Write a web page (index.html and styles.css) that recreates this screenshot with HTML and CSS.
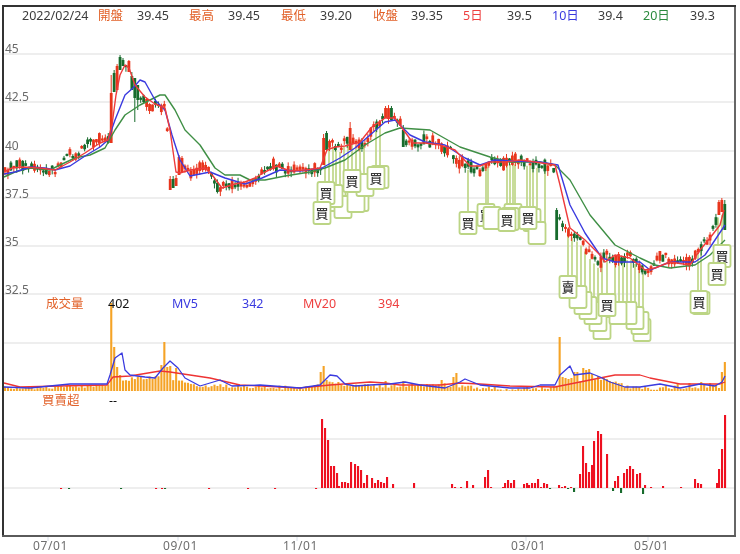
FILE: index.html
```html
<!DOCTYPE html>
<html lang="zh-Hant">
<head>
<meta charset="utf-8">
<title>2022/02/24</title>
<link rel="stylesheet" href="styles.css">
</head>
<body>
<main class="chart">
<svg id="chart" class="chart-svg" width="740" height="554" viewBox="0 0 740 554">
  <g id="grid"></g>
  <g id="stems"></g>
  <g id="candles"></g>
  <g id="averages"></g>
  <g id="markers"></g>
  <g id="volume"></g>
  <g id="netbuy"></g>
  <g id="frame"></g>
  <g class="legend">
    <text class="ink" x="22" y="20">2022/02/24</text>
    <text class="lab" x="98" y="20">開盤</text><text class="ink" x="137" y="20">39.45</text>
    <text class="lab" x="189" y="20">最高</text><text class="ink" x="228" y="20">39.45</text>
    <text class="lab" x="281" y="20">最低</text><text class="ink" x="320" y="20">39.20</text>
    <text class="lab" x="373" y="20">收盤</text><text class="ink" x="411" y="20">39.35</text>
    <text class="red" x="463" y="20">5日</text><text class="ink" x="507" y="20">39.5</text>
    <text class="blue" x="552" y="20">10日</text><text class="ink" x="598" y="20">39.4</text>
    <text class="green" x="643" y="20">20日</text><text class="ink" x="690" y="20">39.3</text>
    <text class="lab" x="46" y="308">成交量</text><text class="black" x="108" y="308">402</text>
    <text class="blue" x="172" y="308">MV5</text><text class="blue" x="242" y="308">342</text>
    <text class="red" x="303" y="308">MV20</text><text class="red" x="378" y="308">394</text>
    <text class="lab" x="42" y="405">買賣超</text><text class="black" x="109" y="405">--</text>
  </g>
  <g class="axis">
    <text x="5" y="53">45</text><text x="5" y="101">42.5</text><text x="5" y="150">40</text>
    <text x="5" y="198">37.5</text><text x="5" y="246">35</text><text x="5" y="294">32.5</text>
  </g>
  <g class="dates">
    <text x="33" y="550">07/01</text><text x="163" y="550">09/01</text><text x="283" y="550">11/01</text>
    <text x="511" y="550">03/01</text><text x="634" y="550">05/01</text>
  </g>
</svg>
</main>
<script src="chart.js"></script>
</body>
</html>
```
FILE: styles.css
```css
html, body { margin: 0; padding: 0; background: #fff; }
.chart { width: 740px; height: 554px; overflow: hidden; }
.chart-svg { display: block; filter: blur(0.45px); }
.legend text { font-family: "Noto Sans", "Noto Sans CJK TC", sans-serif; font-size: 12.5px; }
.ink { fill: #3c3c3c; }
.black { fill: #111; }
.lab { fill: #e2622a; }
.red { fill: #ee3f3f; }
.blue { fill: #3a3adf; }
.green { fill: #2b8a3e; }
.axis text { font-family: "Noto Sans", sans-serif; font-size: 12px; fill: #6a6a6a; }
.dates text { font-family: "Noto Sans", sans-serif; font-size: 12px; letter-spacing: .6px; fill: #6e6e6e; }
.marker-box { fill: #fff; stroke: #bcd585; stroke-width: 1.8; }
.marker-text { font-family: "Noto Sans CJK TC", sans-serif; font-size: 13px; font-weight: 500; fill: #3a3a3a; text-anchor: middle; }
```
FILE: chart.js
```js
(function () {
var NS = "http://www.w3.org/2000/svg";
function el(parent, name, attrs) {
  var e = document.createElementNS(NS, name);
  for (var k in attrs) e.setAttribute(k, attrs[k]);
  document.getElementById(parent).appendChild(e);
  return e;
}
var seed = 17;
function rnd() { seed = (seed * 16807) % 2147483647; return (seed - 1) / 2147483646; }
function interp(path, x) {
  for (var i = 1; i < path.length; i++) {
    if (x <= path[i][0]) {
      var a = path[i - 1], b = path[i];
      return a[1] + (b[1] - a[1]) * (x - a[0]) / (b[0] - a[0]);
    }
  }
  return path[path.length - 1][1];
}
function line(parent, x1, y1, x2, y2, color, w) {
  return el(parent, "line", { x1: x1, y1: y1, x2: x2, y2: y2, stroke: color, "stroke-width": w });
}
function curve(parent, pts, color, w) {
  el(parent, "polyline", {
    points: pts.map(function (p) { return p.join(","); }).join(" "),
    fill: "none", stroke: color, "stroke-width": w, "stroke-linejoin": "round"
  });
}

/* grid and frame */
[54, 102, 151, 198, 246, 294, 343, 439, 488].forEach(function (y) {
  line("grid", 4, y, 734, y, "#e9e9e9", 1.3);
});
line("frame", 3, 5, 3, 537, "#333", 2);
line("frame", 2, 6, 736, 6, "#333", 2);
line("frame", 735, 5, 735, 536, "#333", 1.5);
line("frame", 2, 536, 736, 536, "#5a5a5a", 2);
[48, 178, 297, 526, 648].forEach(function (x) { line("frame", x, 537, x, 541, "#d8dfe8", 1); });

/* price */
var closes = [[4,173],[12,168],[20,163],[30,168],[40,168],[48,170],[55,171],[62,163],[68,150],[75,156],[85,146],[92,141],[100,140],[108,139],
[112,118],[115,82],[118,78],[121,64],[128,66],[135,90],[142,98],[150,105],[160,105],[166,108],[170,183],[176,180],[181,166],[190,172],[200,167],[210,170],
[218,189],[224,186],[232,182],[243,188],[250,183],[262,172],[275,165],[285,170],[295,171],[310,170],[320,170],[325,148],[330,142],[340,148],[350,135],[358,145],[368,140],
[372,125],[380,122],[387,112],[392,118],[400,122],[405,140],[415,145],[425,140],[435,143],[450,150],[458,162],[465,165],[472,167],[480,172],[490,160],[500,163],[510,160],[520,161],[530,162],[540,165],[555,168],
[560,225],[570,232],[580,240],[590,255],[600,266],[605,250],[612,262],[620,258],[630,255],[640,265],[645,272],[650,272],[655,262],[660,258],[665,255],[672,262],[680,262],[690,263],[697,250],[702,245],[708,240],[715,222],[720,208],[725,215]];
var big = {
  112:[93,143,1,75],115:[73,92,0,70],118:[66,90,1,64],121:[57,70,0,55],124:[60,66,0,58],128:[61,72,1,60],131:[76,90,0,72],134:[78,98,0,122],137:[85,100,0,110],
  170:[179,190,1,176],173:[179,188,0,176],176:[178,186,1,175],180:[157,175,1,155],183:[158,172,1,156],
  325:[138,165,1,134],328:[133,150,0,131],350:[128,150,1,122],387:[108,118,1,106],390:[108,120,0,106],404:[130,147,0,125],
  558:[210,240,0,208],718:[202,215,1,200],721:[200,212,1,198],724:[204,230,0,200]
};
var spacing = 2.95;
for (var i = 0; i < 246; i++) {
  var x = 5 + i * spacing, key = null;
  for (var k in big) if (Math.abs(k - x) < spacing / 2) key = k;
  if (x > 726) break;
  var up, bodyTop, bodyBot, wt, wb;
  if (key) {
    var b = big[key];
    bodyTop = b[0]; bodyBot = b[1]; up = b[2] === 1;
    wt = Math.min(b[3], bodyTop); wb = Math.max(b[3], bodyBot);
  } else {
    var c = interp(closes, x) + (rnd() - .5) * 6;
    var h = 2 + rnd() * rnd() * 11;
    bodyTop = c - h / 2; bodyBot = c + h / 2; up = rnd() > .42;
    wt = bodyTop - rnd() * 4; wb = bodyBot + rnd() * 5;
  }
  var col = up ? "#e8351c" : "#176b2c";
  line("candles", x, wt, x, wb, col, 1);
  el("candles", "rect", { x: x - 1.4, y: bodyTop, width: 2.8, height: bodyBot - bodyTop, fill: col });
}

/* moving averages */
var ma5 = [[4,172],[12,168],[22,167],[40,168],[55,170],[70,162],[85,153],[100,143],[108,140],[112,125],[116,95],[120,75],[125,65],[129,68],[135,85],[145,97],[155,104],[165,108],[170,130],[176,172],[180,173],[190,170],[205,168],[213,176],[222,188],[235,184],[245,182],[255,178],[265,172],[277,166],[290,171],[305,170],[320,168],[327,150],[335,147],[345,146],[360,142],[372,127],[385,118],[395,118],[405,132],[413,143],[425,143],[440,145],[455,150],[470,166],[480,166],[490,162],[505,162],[520,160],[535,162],[555,165],[560,185],[570,228],[585,240],[600,255],[605,262],[615,255],[630,258],[645,270],[655,268],[670,262],[690,265],[700,250],[710,238],[720,225],[724,210]];
var ma10 = [[4,174],[15,172],[30,167],[45,168],[55,170],[70,166],[85,156],[100,147],[108,140],[115,120],[125,95],[133,88],[140,80],[145,82],[155,100],[165,110],[172,135],[180,160],[190,176],[210,172],[225,178],[245,184],[262,178],[280,170],[300,171],[322,168],[340,158],[355,148],[370,135],[385,122],[395,120],[410,135],[425,142],[445,145],[465,158],[480,165],[495,160],[515,161],[540,162],[558,165],[570,205],[585,233],[602,258],[615,262],[640,262],[650,270],[670,262],[695,262],[705,255],[715,240],[725,225]];
var ma20 = [[4,177],[15,172],[30,168],[50,170],[60,165],[75,158],[90,155],[105,148],[115,130],[125,115],[140,105],[150,100],[160,95],[165,95],[175,110],[185,130],[200,145],[215,168],[225,175],[240,175],[250,180],[265,180],[285,176],[310,172],[325,168],[345,160],[365,145],[385,133],[400,128],[430,130],[460,147],[490,157],[510,162],[540,162],[555,165],[570,180],[590,215],[615,245],[640,258],[655,265],[670,268],[695,265],[710,255],[725,240]];
curve("averages", ma20, "#3f8f45", 1.4);
curve("averages", ma10, "#3a3adf", 1.4);
curve("averages", ma5, "#ee3b3b", 1.4);

/* buy / sell markers: centre x, centre y, visible label; drawn back to front */
var boxes = [
  [337,200],[343,207],[334,196],[360,200],[356,201],[365,185],[326,193,"買"],[322,213,"買"],[352,181,"買"],[380,177],[376,178,"買"],
  [468,223,"買"],[532,220],[537,233],[486,215,"買"],[492,218],[513,215],[510,219],[507,220,"買"],[528,218,"買"],
  [602,328],[598,320],[593,313],[588,308],[583,303],[578,297],[642,330],[640,323],[635,318],[628,313],[618,313],[607,305,"買"],
  [568,287,"賣"],[701,303],[699,302,"買"],[722,256,"買"],[717,274,"買"]
];
/* stems: x and the y where each one meets its marker */
var stems = [[325,185],[329,185],[333,190],[336,190],[340,195],[344,195],[348,195],[352,175],[356,190],[360,190],[364,175],[376,170],[380,170],
  [468,215],[486,205],[488,205],[507,210],[510,210],[513,210],[515,210],[527,210],[530,210],[533,210],[537,225],[545,225],
  [568,280],[572,280],[577,288],[581,295],[585,300],[590,303],[594,308],[598,312],[602,318],[607,295],[615,305],[619,305],[623,305],[627,305],[631,305],[635,310],[639,315],[643,320],
  [698,295],[701,295],[718,250],[722,250]];
stems.forEach(function (s) {
  line("stems", s[0], interp(closes, s[0]) + 4, s[0], s[1], "#c3d98f", 1.8);
});
boxes.forEach(function (m) {
  el("markers", "rect", { class: "marker-box", x: m[0] - 8.5, y: m[1] - 11, width: 17, height: 22, rx: 2 });
  if (m[2]) {
    el("markers", "text", { class: "marker-text", x: m[0], y: m[1] + 5 }).textContent = m[2];
  }
});

/* volume */
var volBase = [[4,385],[30,386],[70,384],[107,384],[112,378],[125,378],[150,375],[175,378],[195,384],[230,384],[300,386],[320,382],[335,380],[350,384],[400,384],[450,383],[470,385],[510,387],[550,386],[575,380],[590,376],[610,378],[625,384],[650,386],[700,385],[726,384]];
var volSpikes = { 110:303,114:347,118:367,121:375,161:365,165:342,168:367,171:366,175:368,322:372,325:366,328:380,386:381,402:381,441:380,454:377,457:373,
  559:337,562:377,565:378,568:379,570:378,574:372,577:372,582:368,586:370,589:369,593:374,598:376,603:378,677:383,688:383,700:382,705:384,710:383,722:372,725:362 };
for (var j = 0; j < 246; j++) {
  var vx = 5 + j * spacing;
  if (vx > 726) break;
  var vTop = interp(volBase, vx) + rnd() * 4;
  for (var s in volSpikes) if (Math.abs(s - vx) < spacing / 2) vTop = volSpikes[s];
  el("volume", "rect", { x: vx - 1, y: vTop, width: 2.1, height: 391 - vTop, fill: "#f5a326" });
}
curve("volume", [[4,383],[20,387],[60,386],[107,385],[113,377],[130,376],[160,371],[170,372],[210,378],[240,385],[300,388],[330,385],[370,382],[385,383],[400,385],[440,385],[460,383],[480,384],[510,386],[555,387],[590,380],[610,376],[615,375],[640,375],[650,378],[680,384],[720,384],[725,382]], "#ee3333", 1.3);
curve("volume", [[4,387],[30,388],[50,386],[70,384],[85,384],[107,384],[110,375],[115,358],[122,353],[125,370],[130,375],[145,377],[155,378],[163,368],[170,361],[178,368],[185,378],[200,386],[220,380],[232,386],[260,385],[300,388],[320,385],[330,375],[337,376],[345,384],[355,386],[370,385],[390,384],[405,382],[420,385],[445,388],[460,382],[465,379],[480,385],[510,388],[530,388],[540,385],[555,385],[560,375],[570,366],[574,375],[590,373],[600,377],[610,382],[625,387],[640,387],[660,384],[680,388],[700,384],[715,386],[722,382],[725,376]], "#3a3adf", 1.3);

/* net buy: [x, top y]; values below the zero line are green */
var net = [[61,488],[69,489],[121,489],[156,488],[162,488],[165,489],[209,488],[248,488],[275,488],[316,488],
[322,419],[325,428],[328,440],[331,466],[334,466],[337,473],[339,486],[342,482],[345,482],[348,483],[351,462],[355,464],[358,466],[361,470],[364,483],[367,475],
[372,478],[375,483],[378,480],[381,482],[384,483],[387,477],[393,484],[414,483],[452,484],[455,487],[461,487],[467,481],[473,485],[485,477],[488,470],[491,487],
[503,487],[505,483],[508,480],[511,483],[514,480],[524,484],[527,483],[529,485],[532,483],[535,483],[538,479],[541,487],[544,483],[547,484],[550,489],
[559,485],[562,487],[565,486],[568,489],[571,487],[574,492],[580,474],[583,446],[586,463],[589,472],[592,465],[594,441],[598,431],[601,434],[607,454],[613,491],[615,481],[618,476],[621,493],[624,473],[627,469],[630,466],[633,469],[637,474],[640,473],[643,494],[645,485],[651,487],[663,486],[681,487],[695,479],[698,483],[701,484],[717,483],[719,469],[722,449],[725,415]];
net.forEach(function (n) {
  var neg = n[1] > 488;
  var t = neg ? 488 : n[1], h = neg ? n[1] - 488 : 488 - n[1];
  el("netbuy", "rect", { x: n[0] - 1, y: t, width: 2.1, height: Math.max(h, 1), fill: neg ? "#176b2c" : "#ee1020" });
});
})();
```
